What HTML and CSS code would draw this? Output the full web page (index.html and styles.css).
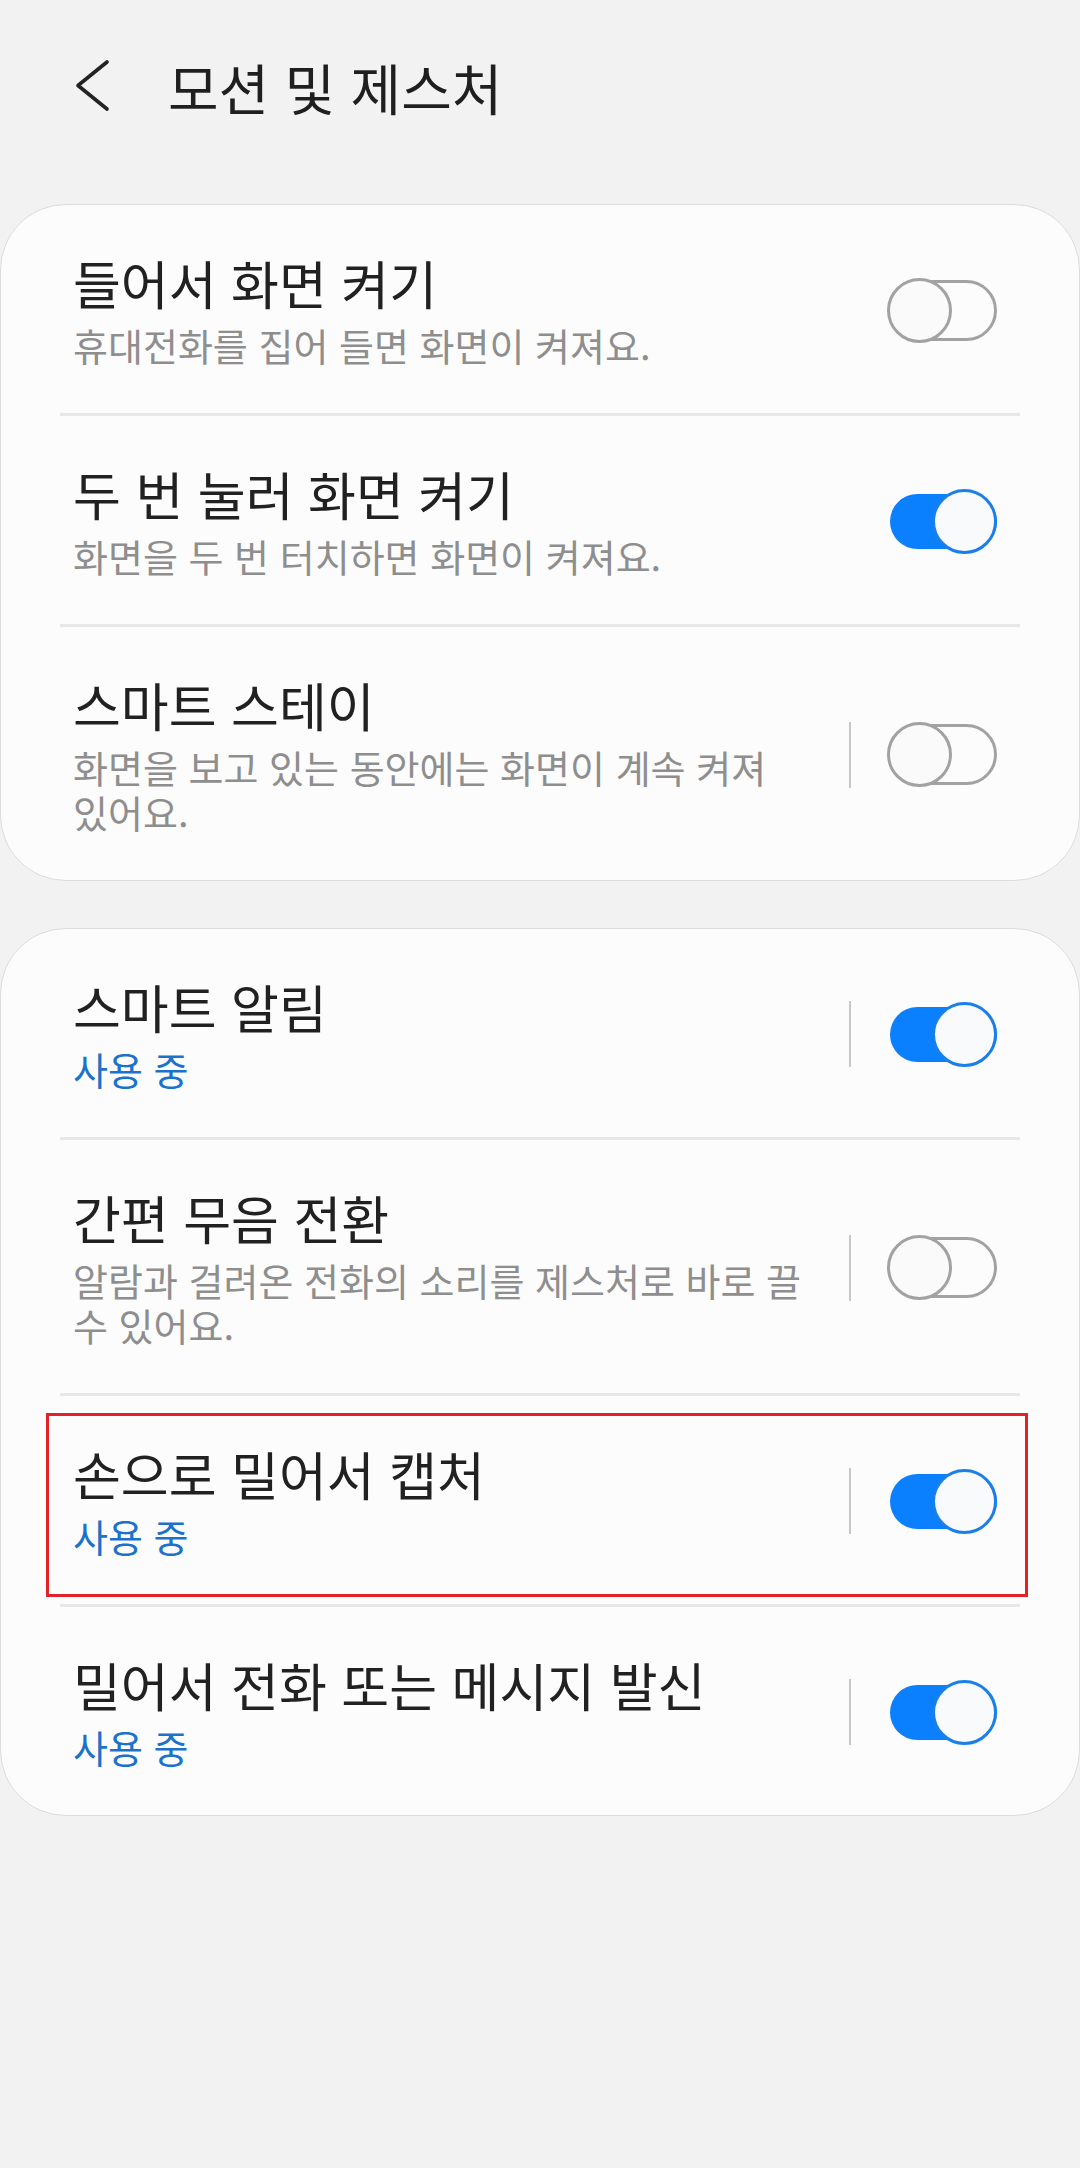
FILE: index.html
```html
<!DOCTYPE html>
<html lang="ko">
<head>
<meta charset="utf-8">
<title>모션 및 제스처</title>
<link rel="stylesheet" href="styles.css">
</head>
<body>
<header class="appbar">
  <svg class="back" width="44" height="60" viewBox="0 0 44 60" aria-hidden="true">
    <polyline points="35,6 6,29.5 35,53" fill="none" stroke="#232323" stroke-width="3.6" stroke-linecap="round" stroke-linejoin="round"/>
  </svg>
  <h1 class="title">모션 및 제스처</h1>
</header>

<section class="card">
  <div class="row">
    <div class="text">
      <div class="name">들어서 화면 켜기</div>
      <div class="sub">휴대전화를 집어 들면 화면이 켜져요.</div>
    </div>
    <span class="switch off"><span class="track"></span><span class="knob"></span></span>
  </div>
  <div class="divider"></div>
  <div class="row">
    <div class="text">
      <div class="name">두 번 눌러 화면 켜기</div>
      <div class="sub">화면을 두 번 터치하면 화면이 켜져요.</div>
    </div>
    <span class="switch on"><span class="track"></span><span class="knob"></span></span>
  </div>
  <div class="divider"></div>
  <div class="row">
    <div class="text">
      <div class="name">스마트 스테이</div>
      <div class="sub">화면을 보고 있는 동안에는 화면이 계속 켜져<br>있어요.</div>
    </div>
    <span class="sep"></span>
    <span class="switch off"><span class="track"></span><span class="knob"></span></span>
  </div>
</section>

<section class="card">
  <div class="row">
    <div class="text">
      <div class="name">스마트 알림</div>
      <div class="sub active">사용 중</div>
    </div>
    <span class="sep"></span>
    <span class="switch on"><span class="track"></span><span class="knob"></span></span>
  </div>
  <div class="divider"></div>
  <div class="row">
    <div class="text">
      <div class="name">간편 무음 전환</div>
      <div class="sub">알람과 걸려온 전화의 소리를 제스처로 바로 끌<br>수 있어요.</div>
    </div>
    <span class="sep"></span>
    <span class="switch off"><span class="track"></span><span class="knob"></span></span>
  </div>
  <div class="divider"></div>
  <div class="row highlighted">
    <div class="text">
      <div class="name">손으로 밀어서 캡처</div>
      <div class="sub active">사용 중</div>
    </div>
    <span class="sep"></span>
    <span class="switch on"><span class="track"></span><span class="knob"></span></span>
    <span class="highlight-box"></span>
  </div>
  <div class="divider"></div>
  <div class="row">
    <div class="text">
      <div class="name">밀어서 전화 또는 메시지 발신</div>
      <div class="sub active">사용 중</div>
    </div>
    <span class="sep"></span>
    <span class="switch on"><span class="track"></span><span class="knob"></span></span>
  </div>
</section>
</body>
</html>
```

FILE: styles.css
```css
* { box-sizing: border-box; }

html, body {
  margin: 0;
  padding: 0;
}

body {
  width: 1080px;
  min-height: 2168px;
  background: #f2f2f2;
  font-family: "Noto Sans CJK KR", "Noto Sans", sans-serif;
  color: #212121;
}

.appbar {
  display: flex;
  align-items: center;
  height: 60px;
  margin-top: 56px;
  padding-left: 72px;
}

.back {
  display: block;
  flex: none;
}

.title {
  margin: 0 0 0 52px;
  font-size: 55px;
  line-height: 60px;
  font-weight: 400;
  color: #1f1f1f;
}

.card {
  margin-top: 88px;
  background: #fcfcfc;
  border: 1px solid #dcdcdc;
  border-radius: 66px;
}

.card + .card {
  margin-top: 47px;
}

.row {
  position: relative;
  display: flex;
  align-items: center;
  padding: 48px 82px 46px 72px;
}

.text {
  flex: 1;
  min-width: 0;
}

.name {
  font-size: 52px;
  line-height: 60px;
  color: #212121;
  white-space: nowrap;
}

.sub {
  margin-top: 9px;
  font-size: 38px;
  line-height: 45px;
  color: #8e8e8e;
  white-space: nowrap;
}

.sub.active {
  color: #1b72cb;
}

.divider {
  height: 3px;
  margin: 0 59px;
  background: #e8e8e8;
}

.sep {
  flex: none;
  width: 2px;
  height: 66px;
  margin-right: 36px;
  background: #c8c8c8;
}

.switch {
  position: relative;
  flex: none;
  width: 110px;
  height: 65px;
}

.track {
  position: absolute;
  left: 3px;
  right: 0;
  border-radius: 32px;
}

.knob {
  position: absolute;
  top: 0;
  width: 65px;
  height: 65px;
  border-radius: 50%;
  border: 3px solid;
}

.switch.off .track {
  top: 2px;
  height: 61px;
  border: 3px solid #a2a2a2;
  background: #fcfcfc;
}

.switch.off .knob {
  left: 0;
  border-color: #a2a2a2;
  background: #fafafa;
}

.switch.on .track {
  top: 5px;
  height: 55px;
  background: #0a80fe;
}

.switch.on .knob {
  right: 0;
  border-color: #1a7fe6;
  background: #f8fafc;
}

.highlight-box {
  position: absolute;
  top: 17px;
  bottom: 7px;
  left: 45px;
  right: 51px;
  border: 3px solid #e4212b;
  pointer-events: none;
}
```
